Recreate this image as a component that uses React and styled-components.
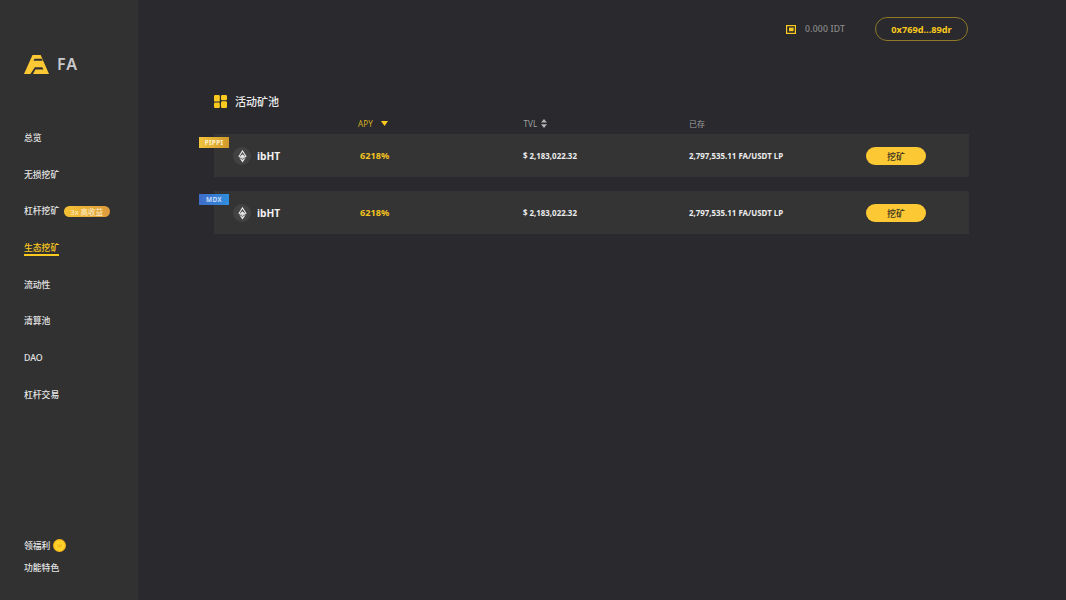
import React from "react"
import styled, { createGlobalStyle } from "styled-components"

const GlobalStyle = createGlobalStyle`
  html, body {
    margin: 0;
    padding: 0;
    height: 100%;
    background: #29292e;
    font-family: "Noto Sans", "Noto Sans CJK SC", sans-serif;
  }
`

const navItems = [
  { label: "总览" },
  { label: "无损挖矿" },
  { label: "杠杆挖矿", badge: "3x 高收益" },
  { label: "生态挖矿", active: true },
  { label: "流动性" },
  { label: "清算池" },
  { label: "DAO" },
  { label: "杠杆交易" },
]

const pools = [
  { tag: "PIPPI", tone: "gold" },
  { tag: "MDX", tone: "blue" },
]

const Logo = () => (
  <svg width="25" height="19" viewBox="0 0 25 19">
    <path fill="#fcc934" d="M8.5 0h8.2L25 19H0z" />
    <path fill="#313131" d="M10.4 3.8H17.8L18.7 5.8H9.6z" />
    <path fill="#313131" d="M10.8 12.2H18.4L19.4 14.6H11.4L9 19H6.4z" />
  </svg>
)

const EthIcon = () => (
  <svg width="9" height="13" viewBox="0 0 10 15">
    <path fill="none" stroke="#e8e8e8" strokeWidth="1.2" d="M5 1 1 7.4 5 9.8l4-2.4z" />
    <path fill="#e8e8e8" d="M1.2 9 5 11.3 8.8 9 5 14.4z" />
    <path fill="#e8e8e8" d="M5 5 8 7.4 5 9.2 2 7.4z" />
  </svg>
)

const GridIcon = () => (
  <svg width="13" height="13" viewBox="0 0 13 13">
    <rect x="0" y="0" width="5.8" height="6.6" rx="1.2" fill="#fcc91f" />
    <rect x="7" y="0" width="6" height="5.2" rx="1.2" fill="#fcc91f" />
    <rect x="0" y="7.6" width="5.8" height="5.4" rx="1.2" fill="#fcc91f" />
    <rect x="7" y="6.2" width="6" height="6.8" rx="1.2" fill="#fcc91f" />
  </svg>
)

const WalletIcon = () => (
  <svg width="10" height="9" viewBox="0 0 10 9">
    <rect x="0.6" y="0.6" width="8.8" height="7.8" fill="none" stroke="#fcc91f" strokeWidth="1.2" />
    <rect x="3" y="2.6" width="4.6" height="3.6" fill="#fcc91f" />
  </svg>
)

const CoinIcon = () => (
  <svg width="13" height="13" viewBox="0 0 13 13">
    <circle cx="6.5" cy="6.5" r="6.5" fill="#fbb71c" />
    <circle cx="6.5" cy="6.5" r="5.2" fill="#fdd32a" />
    <path fill="#f7bd22" d="M3.8 4.8 5.3 6l1.2-1.8L7.7 6l1.5-1.2-.5 3.6H4.3z" />
  </svg>
)

const SortIcon = () => (
  <svg width="6" height="9" viewBox="0 0 6 9">
    <path fill="#b5b5b5" d="M3 0 6 3.6H0zM0 5.2h6L3 9z" />
  </svg>
)

const DownIcon = () => (
  <svg width="7" height="5" viewBox="0 0 7 5">
    <path fill="#fcc91f" d="M0 0h7L3.5 5z" />
  </svg>
)

export default function App() {
  return (
    <Page>
      <GlobalStyle />
      <Sidebar>
        <Brand>
          <Logo />
          <BrandName>FA</BrandName>
        </Brand>
        <Nav>
          {navItems.map((item) => (
            <NavRow key={item.label}>
              <NavLabel $active={item.active}>{item.label}</NavLabel>
              {item.badge && <Badge>{item.badge}</Badge>}
            </NavRow>
          ))}
        </Nav>
        <SideFooter>
          <FooterRow>
            领福利
            <CoinIcon />
          </FooterRow>
          <FooterRow>功能特色</FooterRow>
        </SideFooter>
      </Sidebar>
      <Main>
        <TopBar>
          <Balance>
            <WalletIcon />
            0.000 IDT
          </Balance>
          <Address>0x769d...89dr</Address>
        </TopBar>
        <Title>
          <GridIcon />
          活动矿池
        </Title>
        <HeadRow>
          <span />
          <HeadCell $on>
            APY
            <DownIcon />
          </HeadCell>
          <HeadCell>
            TVL
            <SortIcon />
          </HeadCell>
          <HeadCell>已存</HeadCell>
          <span />
        </HeadRow>
        <Rows>
          {pools.map((pool) => (
            <PoolRow key={pool.tag}>
              <Tag $tone={pool.tone}>{pool.tag}</Tag>
              <Asset>
                <AssetIcon>
                  <EthIcon />
                </AssetIcon>
                ibHT
              </Asset>
              <Apy>6218%</Apy>
              <Amount>$ 2,183,022.32</Amount>
              <Amount>2,797,535.11 FA/USDT LP</Amount>
              <MineButton>挖矿</MineButton>
            </PoolRow>
          ))}
        </Rows>
      </Main>
    </Page>
  )
}

const Page = styled.div`
  display: flex;
  width: 1066px;
  height: 600px;
  overflow: hidden;
  background: #29292e;
`

const Sidebar = styled.aside`
  display: flex;
  flex-direction: column;
  flex: none;
  box-sizing: border-box;
  width: 138px;
  height: 600px;
  padding: 54px 0 26px 24px;
  background: #313131;
`

const Brand = styled.div`
  display: flex;
  align-items: center;
  gap: 8px;
  height: 20px;
`

const BrandName = styled.span`
  font-size: 16px;
  font-weight: 600;
  color: #c9c9c9;
  letter-spacing: 1px;
`

const Nav = styled.nav`
  display: flex;
  flex-direction: column;
  gap: 16.7px;
  margin-top: 54px;
`

const NavRow = styled.div`
  display: flex;
  align-items: center;
  gap: 4.5px;
  height: 20px;
`

const NavLabel = styled.span`
  position: relative;
  font-size: 8.8px;
  font-weight: 500;
  line-height: 14px;
  color: ${({ $active }) => ($active ? "#fcc91f" : "#e4e4e4")};

  &::after {
    content: "";
    display: ${({ $active }) => ($active ? "block" : "none")};
    position: absolute;
    left: 0;
    right: 0;
    bottom: -1px;
    height: 2px;
    background: #fcc91f;
  }
`

const Badge = styled.span`
  display: flex;
  align-items: center;
  justify-content: center;
  width: 46px;
  height: 11px;
  border-radius: 6px;
  background: linear-gradient(90deg, #f6c233, #dd9a3e);
  font-size: 7.5px;
  color: #fff1cf;
`

const SideFooter = styled.div`
  display: flex;
  flex-direction: column;
  gap: 9px;
  margin-top: auto;
`

const FooterRow = styled.div`
  display: flex;
  align-items: center;
  gap: 3px;
  height: 13px;
  font-size: 8.8px;
  font-weight: 500;
  color: #e4e4e4;
`

const Main = styled.main`
  flex: 1;
  box-sizing: border-box;
  padding: 17px 97px 0 76px;
`

const TopBar = styled.header`
  display: flex;
  align-items: center;
  justify-content: flex-end;
  gap: 30px;
  height: 24px;
`

const Balance = styled.div`
  display: flex;
  align-items: center;
  gap: 9px;
  font-size: 8.6px;
  font-weight: 500;
  letter-spacing: 0.2px;
  color: #8d8d8d;
`

const Address = styled.div`
  display: flex;
  align-items: center;
  justify-content: center;
  box-sizing: border-box;
  width: 93px;
  height: 24px;
  margin-right: 1px;
  border: 1px solid #8f7826;
  border-radius: 12px;
  font-size: 9.2px;
  font-weight: 700;
  color: #fcc91f;
`

const Title = styled.h1`
  display: flex;
  align-items: center;
  gap: 8px;
  height: 16px;
  margin: 52px 0 0;
  font-size: 11px;
  font-weight: 500;
  color: #ededed;
`

const HeadRow = styled.div`
  display: grid;
  grid-template-columns: 144px 165.5px 165.5px 177px 1fr;
  align-items: center;
  height: 14px;
  margin-top: 7px;
`

const HeadCell = styled.div`
  display: flex;
  align-items: center;
  gap: ${({ $on }) => ($on ? "8px" : "4px")};
  font-size: 8px;
  letter-spacing: 0.1px;
  color: ${({ $on }) => ($on ? "#d8b01f" : "#a0a0a0")};
`

const Rows = styled.div`
  display: flex;
  flex-direction: column;
  gap: 14px;
  margin-top: 4px;
`

const PoolRow = styled.div`
  position: relative;
  display: grid;
  grid-template-columns: 146px 163px 166px 177px 1fr;
  align-items: center;
  box-sizing: border-box;
  height: 43px;
  padding-top: 1px;
  background: #343434;
`

const Tag = styled.span`
  position: absolute;
  top: 3px;
  left: -15px;
  display: flex;
  align-items: center;
  justify-content: center;
  width: 30px;
  height: 11px;
  background: ${({ $tone }) =>
    $tone === "blue"
      ? "linear-gradient(90deg, #3f6cc9, #2f8fde)"
      : "linear-gradient(90deg, #f2c33c, #d09a2c)"};
  font-size: 6.5px;
  font-weight: 700;
  letter-spacing: 0.3px;
  color: ${({ $tone }) => ($tone === "blue" ? "#c5d8f5" : "#fff3cf")};
`

const Asset = styled.div`
  display: flex;
  align-items: center;
  gap: 6px;
  padding-left: 19px;
  font-size: 10.2px;
  font-weight: 700;
  color: #f2f2f2;
`

const AssetIcon = styled.span`
  display: flex;
  align-items: center;
  justify-content: center;
  width: 18px;
  height: 18px;
  border-radius: 50%;
  background: #424242;
`

const Apy = styled.div`
  margin-bottom: 2px;
  font-size: 9.2px;
  font-weight: 700;
  color: #f3c21f;
`

const Amount = styled.div`
  font-size: 7.9px;
  font-weight: 700;
  color: #ececec;
  white-space: nowrap;
`

const MineButton = styled.button`
  justify-self: start;
  width: 60px;
  height: 18px;
  margin: 0;
  padding: 0;
  border: none;
  border-radius: 9px;
  background: #fcc935;
  font-family: inherit;
  font-size: 9px;
  font-weight: 500;
  color: #3a3320;
`
